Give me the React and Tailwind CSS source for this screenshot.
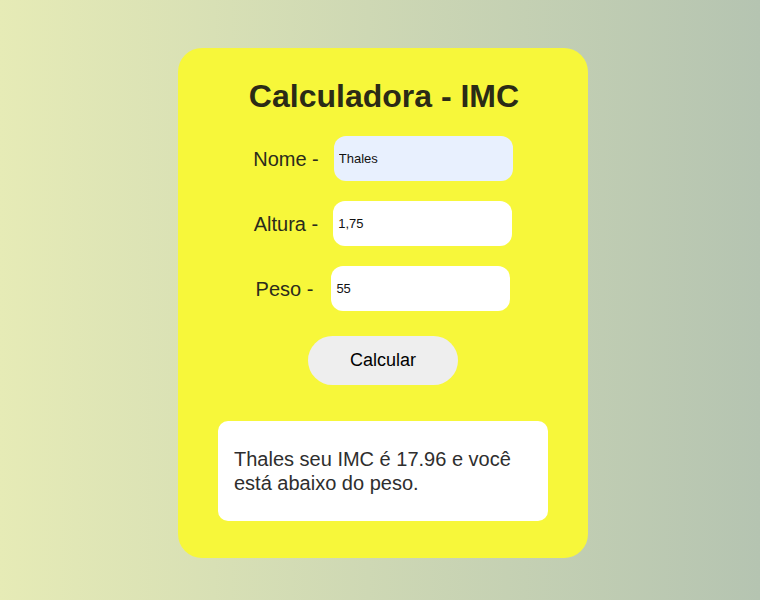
import { useState } from 'react';

const Field = ({ label, value, onChange, autofill, gap }) => (
  <div className={`flex items-center justify-center h-[45px] ${gap}`}>
    <label className="text-[20px] text-[#2b2b1c]">{label}</label>
    <input
      type="text"
      value={value}
      onChange={onChange}
      className={`w-[179px] h-[45px] rounded-[12px] px-[5px] text-[13px] text-[#111] outline-none ${autofill ? 'bg-[#e8f0fe]' : 'bg-white'}`}
    />
  </div>
);

const App = () => {
  const [nome, setNome] = useState('Thales');
  const [altura, setAltura] = useState('1,75');
  const [peso, setPeso] = useState('55');

  return (
    <div
      className="min-h-[600px] w-full flex justify-center pt-[48px] pl-[6px] bg-gradient-to-r from-[#e6ebb6] to-[#b5c4b1]"
      style={{ fontFamily: '"Liberation Sans", Arial, sans-serif' }}
    >
      <div className="w-[410px] h-[510px] bg-[#f7f73a] rounded-[24px] flex flex-col items-center">
        <h1 className="mt-[30px] text-[32px] leading-[37px] font-bold text-[#2b2b16] pl-[2px]">
          Calculadora - IMC
        </h1>

        <div className="mt-[21px] flex flex-col gap-[20px]">
          <Field label="Nome -" value={nome} onChange={(e) => setNome(e.target.value)} autofill gap="gap-[15px]" />
          <Field label="Altura -" value={altura} onChange={(e) => setAltura(e.target.value)} gap="gap-[15px]" />
          <Field label="Peso -" value={peso} onChange={(e) => setPeso(e.target.value)} gap="gap-[18px]" />
        </div>

        <button className="mt-[25px] w-[150px] h-[49px] rounded-full bg-[#eeeeee] text-[18px] text-black">
          Calcular
        </button>

        <div className="mt-[36px] w-[330px] h-[100px] bg-white rounded-[10px] px-[16px] pt-[26px]">
          <p className="text-[20px] leading-[24px] text-[#2e2e2e]">
            Thales seu IMC é 17.96 e você está abaixo do peso.
          </p>
        </div>
      </div>
    </div>
  );
};

export default App;
